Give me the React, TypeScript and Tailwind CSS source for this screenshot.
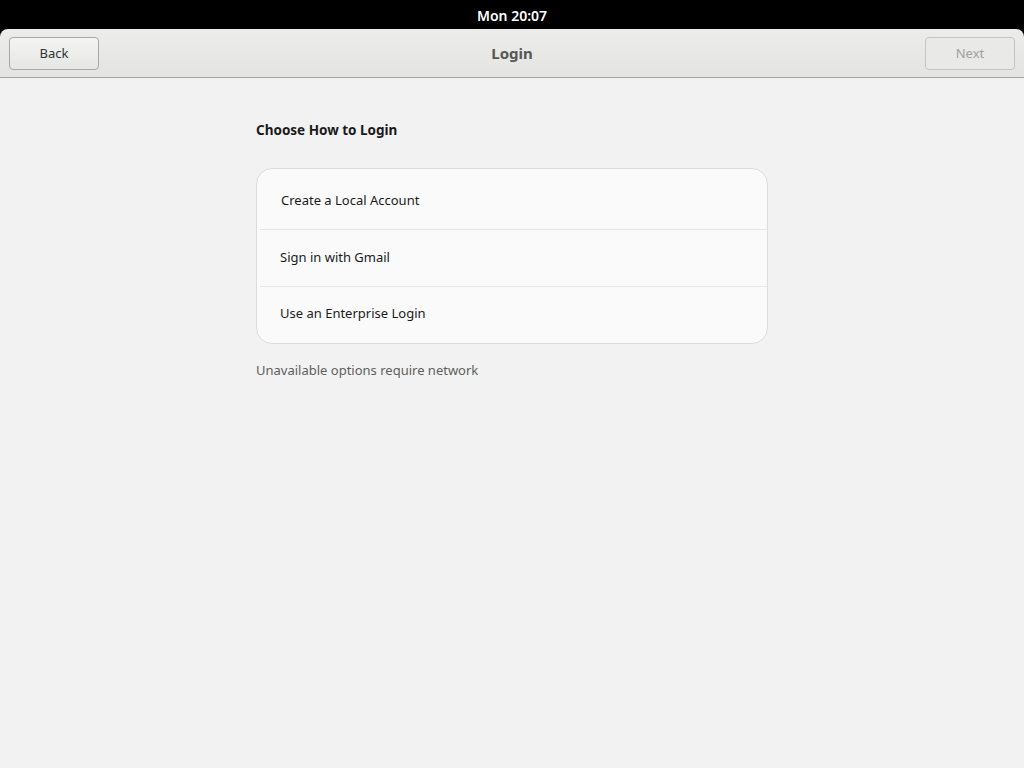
export default function App() {
  const options = [
    { label: "Create a Local Account", h: "h-[60px] pt-[4px]", pl: "pl-[24px]" },
    { label: "Sign in with Gmail", h: "h-[56px]", pl: "pl-[20px]" },
    { label: "Use an Enterprise Login", h: "h-[56px] pb-[2px]", pl: "pl-[20px]" },
  ]

  return (
    <div className="flex h-[768px] w-[1024px] flex-col bg-black font-['Noto_Sans',sans-serif] text-[13px]">
      <div className="flex h-[29px] items-center justify-center pt-[2px] text-[14px] font-semibold text-white">
        Mon 20:07
      </div>
      <div className="flex h-[49px] items-center justify-between rounded-t-[8px] border-b border-[#a5a5a3] bg-gradient-to-b from-[#ececeb] to-[#e4e4e2] px-[9px]">
        <button className="h-[33px] w-[90px] rounded-[4px] border border-[#a8a8a6] bg-gradient-to-b from-[#f4f4f3] to-[#e6e6e4] pt-[2px] text-[#2e3436]">
          Back
        </button>
        <div className="text-[15px] font-bold text-[#555753]">Login</div>
        <button className="h-[33px] w-[90px] rounded-[4px] border border-[#c4c4c2] bg-[#e9e9e8] pt-[2px] text-[#a0a19e]">
          Next
        </button>
      </div>
      <div className="flex flex-1 flex-col bg-[#f2f2f2] pl-[256px] pt-[40px]">
        <div className="w-[512px]">
          <div className="text-[13.5px] font-bold leading-[24px] text-[#1a1a1a]">Choose How to Login</div>
          <div className="mt-[26px] overflow-hidden rounded-[16px] border border-[#dcdcdb] bg-[#fafafa]">
            {options.map((o, i) => (
              <div key={o.label} className={i > 0 ? "ml-[3px] border-t border-[#e6e6e5]" : ""}>
                <div className={`flex items-center ${o.h} ${o.pl} text-[#1a1a1a]`}>{o.label}</div>
              </div>
            ))}
          </div>
          <div className="mt-[17px] text-[#5e5f5c]">Unavailable options require network</div>
        </div>
      </div>
    </div>
  )
}
